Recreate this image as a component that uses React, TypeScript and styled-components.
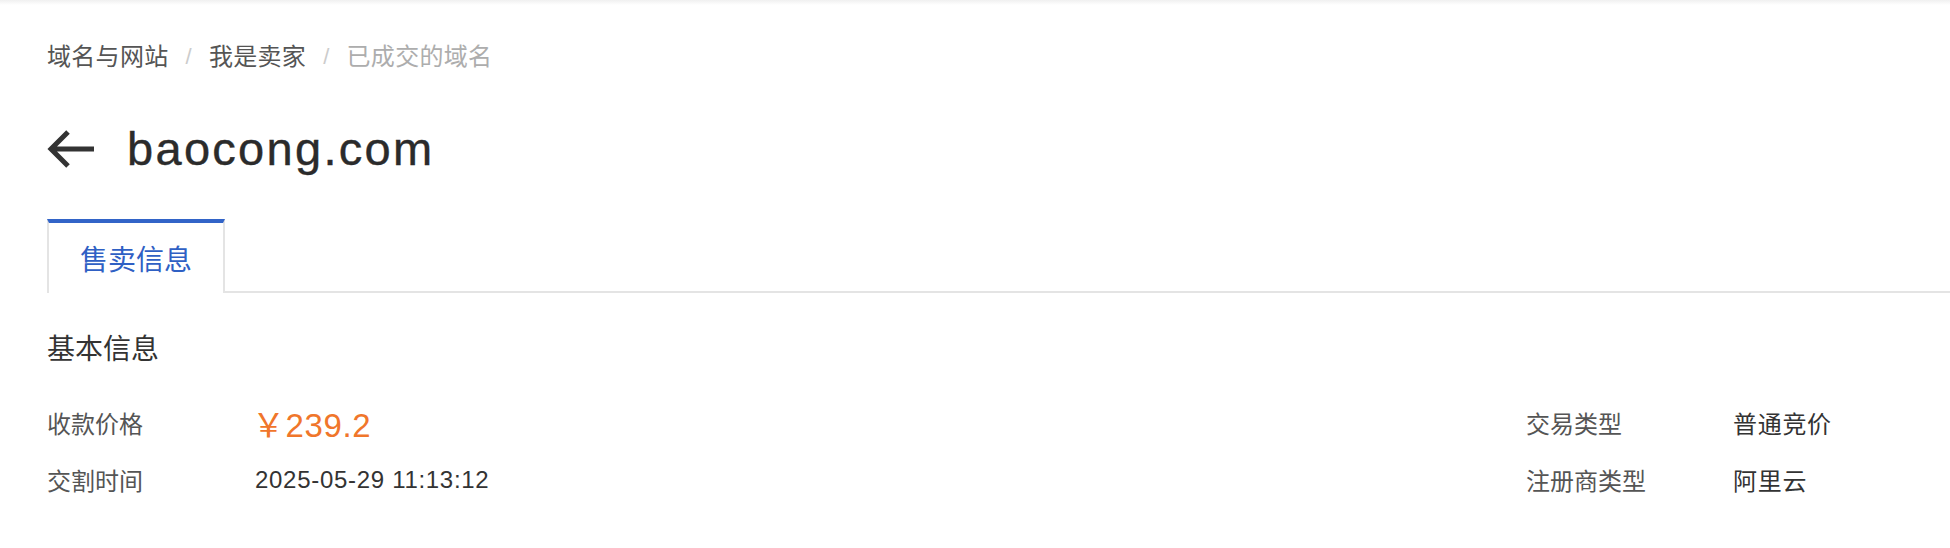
import React from "react";
import styled, { createGlobalStyle } from "styled-components";

const GlobalStyle = createGlobalStyle`
  html, body {
    margin: 0;
    padding: 0;
    background: #ffffff;
  }
  body {
    font-family: "Liberation Sans", "Noto Sans CJK SC", sans-serif;
    color: #333333;
    -webkit-font-smoothing: antialiased;
  }
`;

const Page = styled.div`
  width: 1950px;
  min-height: 548px;
  background: #fff;
`;

const TopShade = styled.div`
  height: 5px;
  background: linear-gradient(#f0f0f0, #ffffff);
`;

const Content = styled.div`
  padding-left: 47px;
`;

const Breadcrumb = styled.nav`
  display: flex;
  align-items: center;
  gap: 17px;
  margin-top: 35px;
  height: 34px;
  font-size: 24px;
  line-height: 34px;
  letter-spacing: 0.3px;
`;

const Crumb = styled.span<{ $current?: boolean }>`
  color: ${(p) => (p.$current ? "#adadad" : "#555555")};
`;

const Sep = styled.span`
  color: #cccccc;
  font-size: 22px;
`;

const TitleRow = styled.div`
  display: flex;
  align-items: center;
  gap: 32px;
  margin-top: 47px;
  height: 56px;
`;

const BackButton = styled.button`
  display: flex;
  align-items: center;
  justify-content: center;
  padding: 0;
  border: 0;
  background: transparent;
  cursor: pointer;
  width: 48px;
  height: 40px;
`;

const Title = styled.h1`
  margin: 0;
  font-size: 47px;
  line-height: 56px;
  font-weight: 400;
  letter-spacing: 2.3px;
  color: #2b2b2b;
  -webkit-text-stroke: 0.4px #2b2b2b;
`;

const TabBar = styled.div`
  display: flex;
  margin-top: 42px;
  border-bottom: 2px solid #e4e4e4;
  height: 72px;
`;

const Tab = styled.div<{ $active?: boolean }>`
  display: flex;
  align-items: center;
  justify-content: center;
  box-sizing: border-box;
  height: 74px;
  margin-bottom: -2px;
  padding: 0 31px;
  background: #ffffff;
  border-top: 4px solid ${(p) => (p.$active ? "#3264c8" : "transparent")};
  border-left: 2px solid #e4e4e4;
  border-right: 2px solid #e4e4e4;
  font-size: 28px;
  color: ${(p) => (p.$active ? "#2f60c4" : "#555555")};
`;

const SectionTitle = styled.h2`
  margin: 37px 0 0;
  font-size: 28px;
  line-height: 40px;
  font-weight: 400;
  color: #333333;
`;

const InfoGrid = styled.div`
  display: grid;
  grid-template-columns: 208px 1fr 207px 217px;
  grid-auto-rows: 57px;
  align-items: center;
  margin-top: 24px;
  font-size: 24px;
`;

const Label = styled.div`
  color: #555555;
`;

const Value = styled.div`
  color: #333333;
  letter-spacing: 0.7px;
`;

const Price = styled.div`
  color: #f0762b;
  font-size: 33px;
  letter-spacing: 0.6px;
  margin-left: -3px;
`;

const ArrowIcon = () => (
  <svg width="48" height="40" viewBox="0 0 48 40" fill="none">
    <path
      d="M47 20H5M21 3L4 20L21 37"
      stroke="#333333"
      strokeWidth="5"
      strokeLinejoin="miter"
      strokeLinecap="butt"
    />
  </svg>
);

export default function App() {
  return (
    <>
      <GlobalStyle />
      <Page>
        <TopShade />
        <Content>
          <Breadcrumb>
            <Crumb>域名与网站</Crumb>
            <Sep>/</Sep>
            <Crumb>我是卖家</Crumb>
            <Sep>/</Sep>
            <Crumb $current>已成交的域名</Crumb>
          </Breadcrumb>
          <TitleRow>
            <BackButton aria-label="返回">
              <ArrowIcon />
            </BackButton>
            <Title>baocong.com</Title>
          </TitleRow>
          <TabBar>
            <Tab $active>售卖信息</Tab>
          </TabBar>
          <SectionTitle>基本信息</SectionTitle>
          <InfoGrid>
            <Label>收款价格</Label>
            <Price>￥239.2</Price>
            <Label>交易类型</Label>
            <Value>普通竞价</Value>
            <Label>交割时间</Label>
            <Value>2025-05-29 11:13:12</Value>
            <Label>注册商类型</Label>
            <Value>阿里云</Value>
          </InfoGrid>
        </Content>
      </Page>
    </>
  );
}
